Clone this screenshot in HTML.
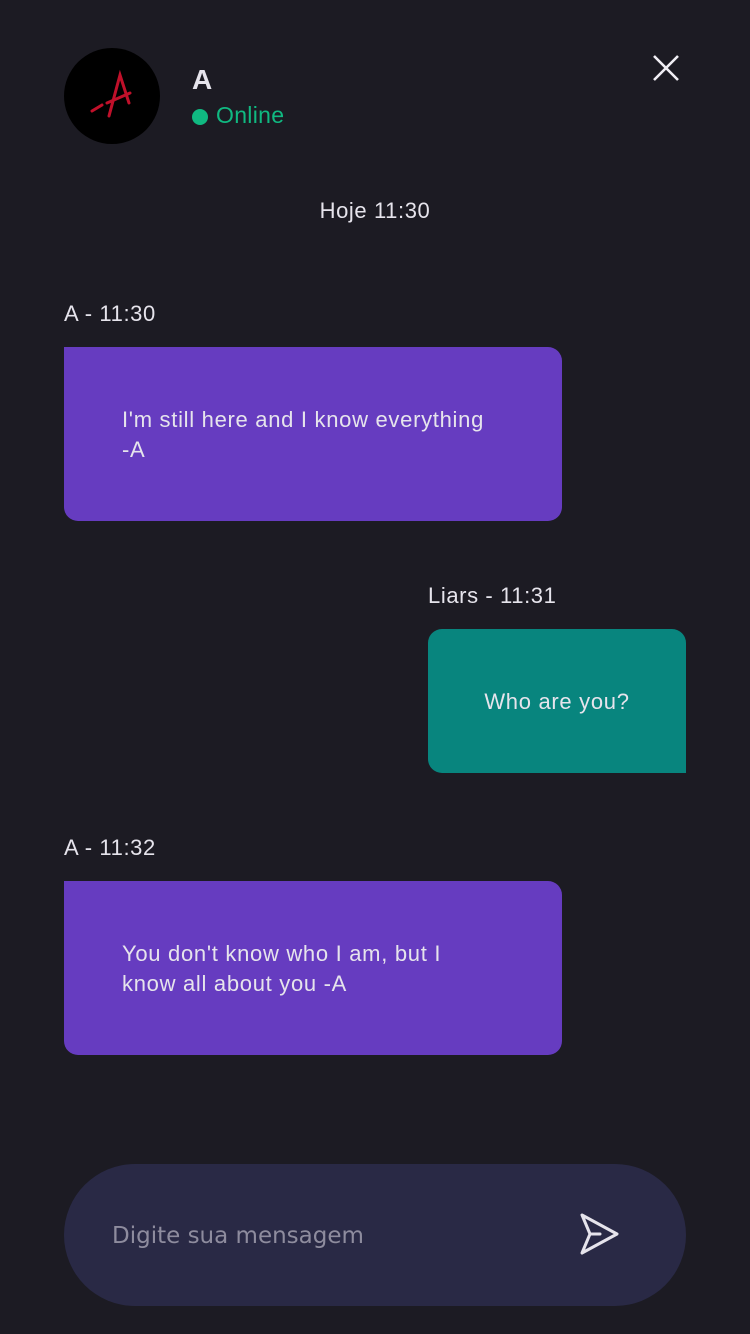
<!DOCTYPE html>
<html><head><meta charset="utf-8"><style>
*{margin:0;padding:0;box-sizing:border-box}
body{width:750px;height:1334px;background:#1c1b23;font-family:"Liberation Sans",sans-serif;color:#e6e4ec;position:relative;overflow:hidden}
.a{position:absolute}
.lbl{font-size:22px;color:#e6e4ec;letter-spacing:0.6px}
.msg{font-size:22px;line-height:30px;color:#e6e4ec;letter-spacing:0.7px}
.p{background:#663cc0;border-radius:0 14px 14px 14px}
</style></head><body>
<svg class="a" style="left:64px;top:48px" width="96" height="96" viewBox="0 0 96 96">
<circle cx="48" cy="48" r="48" fill="#000"/>
<g stroke="#c0102a" stroke-width="3" stroke-linecap="round" fill="none">
<path d="M45 68 L56 27 L65 55"/><path d="M43 55 L66 45"/><path d="M28 63 L38 57"/></g>
</svg>
<div class="a" style="left:192px;top:64px;font-size:28px;font-weight:bold;color:#e6e4ec">A</div>
<div class="a" style="left:192px;top:109px;width:16px;height:16px;border-radius:50%;background:#10b981"></div>
<div class="a" style="left:216px;top:102px;font-size:23px;color:#10b981;letter-spacing:0.3px">Online</div>
<svg class="a" style="left:652px;top:54px" width="28" height="28" viewBox="0 0 28 28"><path d="M2 2L26 26M26 2L2 26" stroke="#f0eef4" stroke-width="2.6"/></svg>
<div class="a lbl" style="left:0;width:750px;text-align:center;top:198px">Hoje 11:30</div>
<div class="a lbl" style="left:64px;top:301px">A - 11:30</div>
<div class="a p" style="left:64px;top:347px;width:498px;height:174px"></div>
<div class="a msg" style="left:122px;top:405px">I'm still here and I know everything<br>-A</div>
<div class="a lbl" style="left:428px;top:583px">Liars - 11:31</div>
<div class="a" style="left:428px;top:629px;width:258px;height:144px;background:#08857e;border-radius:14px 14px 0 14px"></div>
<div class="a msg" style="left:428px;width:258px;text-align:center;top:687px">Who are you?</div>
<div class="a lbl" style="left:64px;top:835px">A - 11:32</div>
<div class="a p" style="left:64px;top:881px;width:498px;height:174px"></div>
<div class="a msg" style="left:122px;top:939px">You don't know who I am, but I<br>know all about you -A</div>
<div class="a" style="left:64px;top:1164px;width:622px;height:142px;border-radius:71px;background:#292945"></div>
<div class="a" style="left:112px;top:1223px;color:#8e8c9e;font-family:'DejaVu Sans',sans-serif;font-size:23px">Digite sua mensagem</div>
<svg class="a" style="left:570px;top:1205px" width="60" height="60" viewBox="0 0 60 60"><path d="M12 10 L47 29 L12 48 L20 29 Z M20 29 H30" fill="none" stroke="#e6e4ec" stroke-width="3" stroke-linejoin="round" stroke-linecap="round"/></svg>
</body></html>
